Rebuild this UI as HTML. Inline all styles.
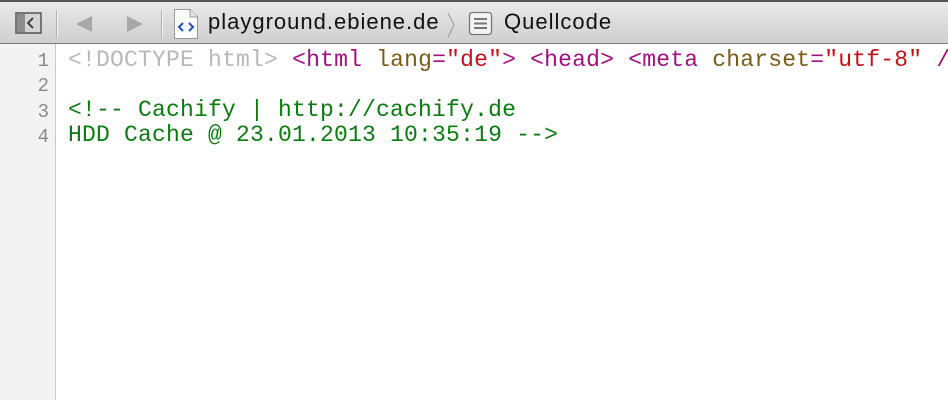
<!DOCTYPE html>
<html><head><meta charset="utf-8">
<style>
html,body{margin:0;padding:0;width:948px;height:400px;overflow:hidden;background:#fff;}
.bar{position:absolute;left:0;top:0;width:948px;height:44px;background:linear-gradient(#e9e9e9,#cfcfcf);border-top:2px solid #555;box-sizing:border-box;border-bottom:1px solid #7a7a7a;}
.sep{position:absolute;top:8px;width:1px;height:28px;background:#b0b0b0;box-shadow:1px 0 0 #f4f4f4;}
.t{position:absolute;font-family:"Liberation Sans",sans-serif;font-size:22px;letter-spacing:1px;color:#111;top:7px;}
.gutter{position:absolute;left:0;top:44px;width:55px;height:356px;background:#f3f3f3;border-right:1px solid #c8c8c8;}
.ln{position:absolute;left:0;width:49px;text-align:right;font-family:"Liberation Mono",monospace;font-size:19px;line-height:25px;color:#8a8a8a;}
.code{position:absolute;left:68px;font-family:"Liberation Mono",monospace;font-size:23px;line-height:25px;letter-spacing:0.2px;white-space:pre;}
.g{color:#b8b8b8}.p{color:#a0107f}.b{color:#7a5c1a}.r{color:#c4101a}.c{color:#0b7a10}
</style></head><body>
<div class="bar">
 <svg style="position:absolute;left:15px;top:10px" width="28" height="22" viewBox="0 0 28 22">
  <rect x="1" y="1" width="25" height="20" fill="#d4d4d4" stroke="#555" stroke-width="1.5"/>
  <rect x="2" y="2" width="8" height="18" fill="#8c8c8c"/>
  <path d="M18 6 L13 11 L18 16" fill="none" stroke="#333" stroke-width="1.8"/>
 </svg>
 <div class="sep" style="left:56px"></div>
 <svg style="position:absolute;left:74px;top:13px" width="20" height="18"><path d="M18 1 L2 9 L18 17Z" fill="#a8a8a8"/></svg>
 <svg style="position:absolute;left:125px;top:13px" width="20" height="18"><path d="M2 1 L18 9 L2 17Z" fill="#a8a8a8"/></svg>
 <div class="sep" style="left:161px"></div>
 <svg style="position:absolute;left:173px;top:6px" width="26" height="32" viewBox="0 0 26 32">
  <path d="M1.5 1.5 H17 L24.5 9 V30.5 H1.5Z" fill="#fdfdfd" stroke="#999"/>
  <path d="M17 1.5 V9 H24.5" fill="#e5e5e5" stroke="#999"/>
  <path d="M10 15 L6 19 L10 23 M16 15 L20 19 L16 23" fill="none" stroke="#1a4fd0" stroke-width="2"/>
 </svg>
 <div class="t" style="left:208px">playground.ebiene.de</div>
 <svg style="position:absolute;left:446px;top:10px" width="10" height="26"><path d="M2 1 L8 13 L2 25" fill="none" stroke="#999" stroke-width="1"/></svg>
 <svg style="position:absolute;left:468px;top:9px" width="26" height="26" viewBox="0 0 26 26">
  <rect x="1.5" y="1.5" width="22" height="22" rx="3" fill="#f4f4f4" stroke="#777" stroke-width="1.3"/>
  <path d="M6 8 H19 M6 12.5 H19 M6 17 H19" stroke="#777" stroke-width="2"/>
 </svg>
 <div class="t" style="left:504px">Quellcode</div>
</div>
<div class="gutter"></div>
<div class="ln" style="top:49px">1</div>
<div class="ln" style="top:74px">2</div>
<div class="ln" style="top:100px">3</div>
<div class="ln" style="top:125px">4</div>
<div class="code" style="top:48px"><span class="g">&lt;!DOCTYPE html&gt;</span> <span class="p">&lt;html</span> <span class="b">lang</span><span class="p">=</span><span class="r">"de"</span><span class="p">&gt;</span> <span class="p">&lt;head&gt;</span> <span class="p">&lt;meta</span> <span class="b">charset</span><span class="p">=</span><span class="r">"utf-8"</span> <span class="p">/&gt;</span></div>
<div class="code c" style="top:98px">&lt;!-- Cachify | http://cachify.de</div>
<div class="code c" style="top:123px">HDD Cache @ 23.01.2013 10:35:19 --&gt;</div>
</body></html>
